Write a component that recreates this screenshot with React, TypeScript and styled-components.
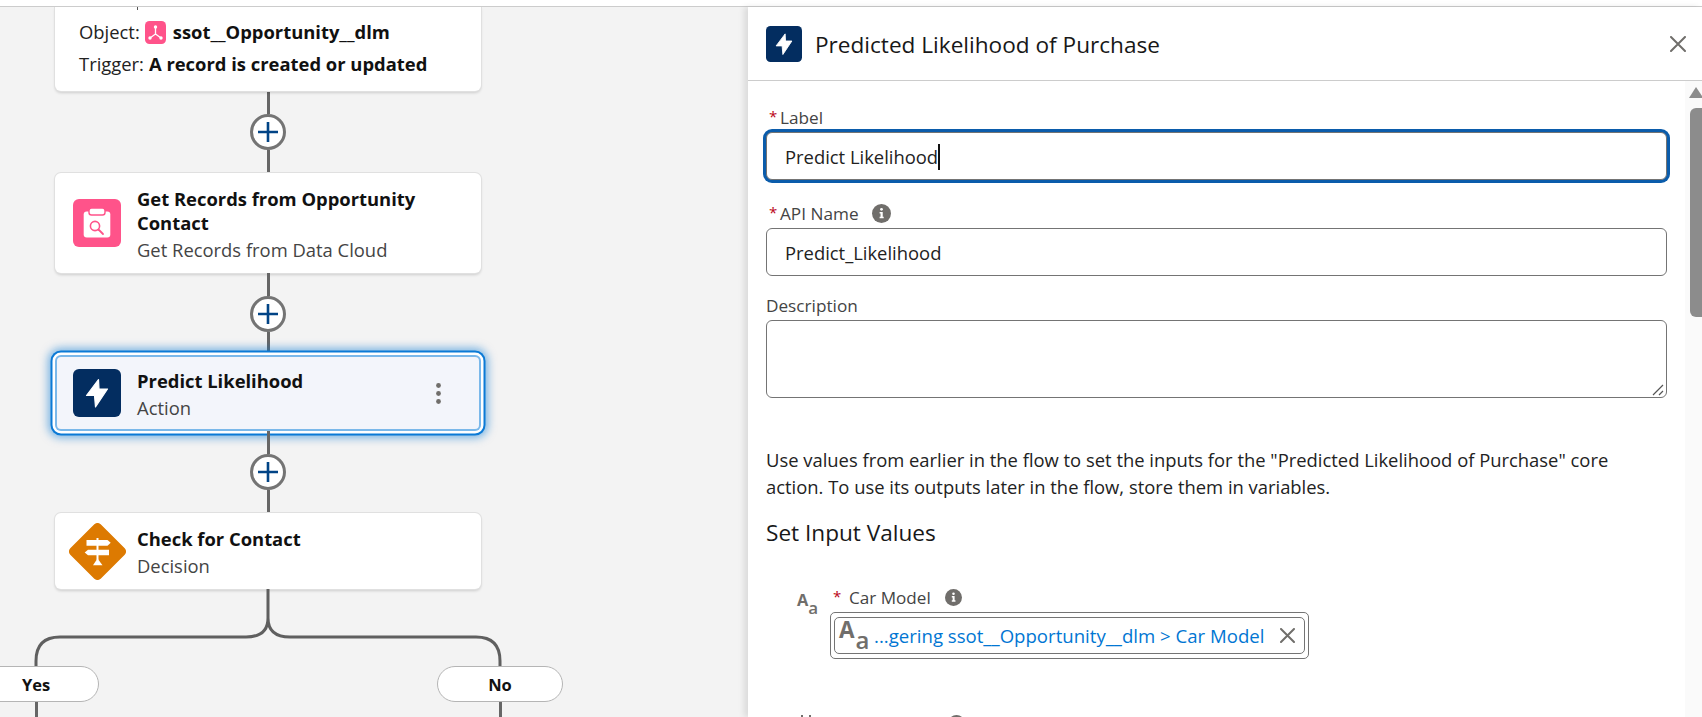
import React from "react";
import styled, {createGlobalStyle} from "styled-components";

const GlobalStyle = createGlobalStyle`
  html, body {
    margin: 0;
    padding: 0;
    height: 100%;
    overflow: hidden;
    background: #ffffff;
    font-family: "Open Sans", "Noto Sans", "Liberation Sans", sans-serif;
    color: #181818;
  }
  * { box-sizing: border-box; }
`;

const Page = styled.div`
  width: 1702px;
  height: 717px;
  display: flex;
  flex-direction: column;
  overflow: hidden;
`;

const TopBar = styled.div`
  height: 7px;
  flex: none;
  background: #ffffff;
  border-bottom: 1px solid #cccccc;
`;

const Main = styled.div`
  flex: 1;
  min-height: 0;
  display: flex;
`;

const Canvas = styled.div`
  width: 748px;
  flex: none;
  background: #f3f3f3;
  overflow: hidden;
  display: flex;
  flex-direction: column;
`;

const FlowColumn = styled.div`
  width: 426px;
  margin-left: 55px;
  display: flex;
  flex-direction: column;
  align-items: center;
`;

const NodeCard = styled.div<{$height: number; $selected?: boolean}>`
  width: 100%;
  height: ${(p) => p.$height}px;
  flex: none;
  display: flex;
  align-items: center;
  gap: 16px;
  padding-left: 18px;
  border-radius: 6px;
  background: ${(p) => (p.$selected ? "#f3f5fb" : "#ffffff")};
  box-shadow: ${(p) =>
    p.$selected
      ? "inset 0 0 0 2px #7ab8ea, 0 0 0 2.5px #ffffff, 0 0 0 4.5px #0b7ad6, 0 0 9px 7px rgba(1, 118, 211, 0.5)"
      : "0 0 0 1px #e0e0e0, 0 2px 3px rgba(0, 0, 0, 0.16)"};
`;

const StartCard = styled.div`
  position: relative;
  width: 100%;
  height: 84px;
  flex: none;
  padding: 8px 0 0 24px;
  background: #ffffff;
  border-radius: 0 0 6px 6px;
  box-shadow: 0 0 0 1px #e0e0e0, 0 2px 3px rgba(0, 0, 0, 0.16);
  &::before {
    content: "";
    position: absolute;
    left: 82px;
    top: 0;
    width: 1px;
    height: 3px;
    background: #555555;
  }
`;

const StartRow = styled.div`
  display: flex;
  align-items: center;
  height: 32px;
  font-size: 18.4px;
  gap: 5px;
  color: #222222;
  b {
    font-weight: 700;
    color: #111111;
  }
`;

const NodeText = styled.div`
  display: flex;
  flex-direction: column;
  padding-top: 3px;
`;

const NodeTitle = styled.div`
  font-size: 18.4px;
  line-height: 24px;
  font-weight: 700;
  color: #111111;
`;

const NodeSub = styled.div`
  font-size: 18.4px;
  line-height: 24px;
  margin-top: 3px;
  color: #444444;
`;

const Kebab = styled.svg`
  margin-left: auto;
  margin-right: 40px;
  flex: none;
`;

const Connector = styled.div`
  height: 82px;
  flex: none;
  display: flex;
  flex-direction: column;
  align-items: center;
`;

const Wire = styled.div<{$fixed?: number}>`
  width: 3px;
  flex: ${(p) => (p.$fixed ? "none" : "1")};
  height: ${(p) => (p.$fixed ? `${p.$fixed}px` : "auto")};
  background: #666666;
`;

const PlusButton = styled.div`
  width: 36px;
  height: 36px;
  flex: none;
  border-radius: 50%;
  border: 3px solid #747474;
  background: #ffffff;
  display: flex;
  align-items: center;
  justify-content: center;
`;

const Branch = styled.svg`
  display: block;
  flex: none;
  margin-left: 33px;
`;

const PillRow = styled.div`
  width: 590px;
  margin-left: -27px;
  margin-top: -2px;
  display: flex;
  justify-content: space-between;
  flex: none;
`;

const BranchLeg = styled.div`
  width: 126px;
  display: flex;
  flex-direction: column;
  align-items: center;
`;

const Pill = styled.div`
  width: 126px;
  height: 36px;
  flex: none;
  border-radius: 18px;
  border: 1px solid #b5b5b5;
  background: #ffffff;
  display: flex;
  align-items: center;
  justify-content: center;
  font-size: 16.5px;
  font-weight: 700;
  color: #111111;
`;

const Panel = styled.div`
  flex: 1;
  min-width: 0;
  display: flex;
  flex-direction: column;
  background: #ffffff;
  box-shadow: -4px 0 6px rgba(0, 0, 0, 0.1);
  position: relative;
`;

const PanelHeader = styled.div`
  height: 74px;
  flex: none;
  display: flex;
  align-items: center;
  gap: 13px;
  padding: 0 16px 0 18px;
  border-bottom: 1px solid #cccccc;
`;

const PanelTitle = styled.div`
  font-size: 22.6px;
  color: #181818;
  padding-top: 2px;
`;

const CloseButton = styled.svg`
  margin-left: auto;
  flex: none;
`;

const PanelBody = styled.div`
  flex: 1;
  min-height: 0;
  display: flex;
`;

const Form = styled.div`
  flex: 1;
  min-width: 0;
  padding: 25px 18px 0;
  overflow: hidden;
`;

const Field = styled.div<{$gap?: number}>`
  margin-bottom: ${(p) => p.$gap ?? 0}px;
`;

const FieldLabel = styled.div`
  display: flex;
  align-items: center;
  height: 24px;
  margin-bottom: 2px;
  padding-bottom: 2px;
  font-size: 17.2px;
  color: #444444;
`;

const Star = styled.span`
  color: #ba0517;
  font-size: 15px;
  width: 14px;
  padding: 0 0 3px 3px;
  flex: none;
`;

const InfoWrap = styled.span<{$left: number}>`
  display: inline-flex;
  margin-left: ${(p) => p.$left}px;
`;

const TextBox = styled.div<{$focused?: boolean}>`
  height: 48px;
  display: flex;
  align-items: center;
  padding: 1px 0 0 18px;
  font-size: 18.4px;
  color: #222222;
  background: #ffffff;
  border: 1px solid #747474;
  border-radius: 6px;
  box-shadow: ${(p) => (p.$focused ? "0 0 0 3px #0b5cab" : "none")};
`;

const Caret = styled.span`
  width: 2px;
  height: 26px;
  background: #111111;
  flex: none;
`;

const DescriptionWrap = styled.div`
  position: relative;
  height: 78px;
`;

const DescriptionBox = styled.textarea`
  display: block;
  width: 100%;
  height: 100%;
  border: 1px solid #747474;
  border-radius: 6px;
  background: #ffffff;
  outline: none;
  resize: none;
`;

const ResizeGrip = styled.svg`
  position: absolute;
  right: 3px;
  bottom: 2px;
`;

const HelpText = styled.p`
  margin: 48px 0 0;
  font-size: 18.4px;
  line-height: 27px;
  color: #222222;
  white-space: nowrap;
`;

const SectionTitle = styled.h2`
  margin: 18px 0 0;
  font-size: 22.6px;
  line-height: 30px;
  font-weight: 400;
  color: #181818;
`;

const InputRow = styled.div<{$top: number}>`
  display: flex;
  margin-top: ${(p) => p.$top}px;
  margin-left: 31px;
`;

const TypeCol = styled.div`
  width: 33px;
  flex: none;
  padding-top: 4px;
`;

const InputCol = styled.div`
  width: 479px;
  flex: none;
`;

const RowLabel = styled.div`
  display: flex;
  align-items: center;
  height: 24px;
  margin-bottom: 3px;
  font-size: 17.1px;
  color: #444444;
`;

const RowStar = styled.span`
  color: #ba0517;
  font-size: 15px;
  width: 19px;
  padding: 0 0 3px 3px;
  flex: none;
`;

const ComboBox = styled.div`
  height: 47px;
  padding: 4px 3px;
  border: 1px solid #747474;
  border-radius: 5px;
  background: #ffffff;
`;

const ValuePill = styled.div`
  height: 37px;
  display: flex;
  align-items: center;
  padding: 0 9px 0 4px;
  border: 1px solid #747474;
  border-radius: 5px;
`;

const ValueText = styled.span`
  margin-left: 7px;
  font-size: 18.6px;
  color: #0176d3;
  white-space: nowrap;
`;

const ValueClear = styled.svg`
  margin-left: auto;
  flex: none;
`;

const TypeIcon = styled.span<{$big?: boolean}>`
  display: inline-flex;
  align-items: flex-start;
  width: ${(p) => (p.$big ? 28 : 20)}px;
  height: ${(p) => (p.$big ? 30 : 20)}px;
  flex: none;
  color: #706e6b;
  font-weight: 700;
  line-height: 1;
  font-size: ${(p) => (p.$big ? 22.5 : 16.4)}px;
  span:first-child {
    margin-top: ${(p) => (p.$big ? -2 : -6)}px;
    margin-right: ${(p) => (p.$big ? 1 : 0)}px;
  }
  span + span {
    margin-top: ${(p) => (p.$big ? 7 : 1)}px;
    font-size: ${(p) => (p.$big ? 24 : 17)}px;
    font-weight: 600;
  }
`;

const ScrollTrack = styled.div`
  width: 17px;
  flex: none;
  background: #fafafa;
  display: flex;
  flex-direction: column;
  align-items: flex-end;
`;

const ScrollArrow = styled.svg`
  margin-top: 6px;
  flex: none;
`;

const ScrollThumb = styled.div`
  width: 12px;
  height: 209px;
  margin-top: 10px;
  border-radius: 6px 0 0 6px;
  background: #8c8c8c;
`;

const BoltIcon = ({size}: {size: number}) => (
    <svg width={size} height={size} viewBox="0 0 48 48" style={{flex: "none"}}>
        <rect width="48" height="48" rx="6" fill="#032d60"/>
        <path d="M25.5 10.5 L13.5 26.5 H21.5 L22.5 38 L34.5 20 H26 Z" fill="#ffffff" stroke="#ffffff" strokeWidth="1.2" strokeLinejoin="round"/>
    </svg>
);

const RecordsIcon = () => (
    <svg width="48" height="48" viewBox="0 0 48 48" style={{flex: "none"}}>
        <rect width="48" height="48" rx="6" fill="#ff538a"/>
        <rect x="10.7" y="12.5" width="26.6" height="26" rx="3" fill="#ffffff"/>
        <rect x="16" y="9" width="16" height="7" rx="2.5" fill="#ffffff" stroke="#ff538a" strokeWidth="1.4"/>
        <circle cx="22" cy="27" r="4.6" fill="none" stroke="#ff538a" strokeWidth="1.6"/>
        <path d="M25.5 30.5 L30 35" stroke="#ff538a" strokeWidth="1.8" strokeLinecap="round"/>
    </svg>
);

const DecisionIcon = () => (
    <svg width="57" height="57" viewBox="0 0 57 57" style={{flex: "none", margin: "0 -5px 0 -4px"}}>
        <rect x="7" y="7" width="43" height="43" rx="4.5" fill="#dd7a01" transform="rotate(45 28.5 28.5)"/>
        <path d="M27.5 15 H29.5 V37 H27.5 Z" fill="#ffffff"/>
        <path d="M17.5 17 H38.5 L41.7 19.8 L38.5 22.7 H17.5 Z" fill="#ffffff"/>
        <path d="M19 26.7 H40 V32.3 H19 L15.7 29.5 Z" fill="#ffffff"/>
        <path d="M28.5 35.5 L33.5 42.3 H24 Z" fill="#ffffff"/>
    </svg>
);

const ObjectIcon = () => (
    <svg width="21" height="23" viewBox="0 0 21 23" style={{flex: "none", margin: "2px 2px 0 0"}}>
        <rect width="21" height="23" rx="4.5" fill="#ff538a"/>
        <path d="M10.5 6 V13 L5 17 M10.5 13 L16 17" fill="none" stroke="#ffffff" strokeWidth="1.3"/>
        <circle cx="10.5" cy="6" r="1.7" fill="#ffffff"/>
        <circle cx="5" cy="17" r="1.7" fill="#ffffff"/>
        <circle cx="16" cy="17" r="1.7" fill="#ffffff"/>
    </svg>
);

const InfoIcon = ({size}: {size: number}) => (
    <svg width={size} height={size} viewBox="0 0 20 20" style={{flex: "none"}}>
        <circle cx="10" cy="10" r="10" fill="#706e6b"/>
        <circle cx="10" cy="5.6" r="1.5" fill="#ffffff"/>
        <path d="M8 8.3 H11.3 V13.3 H12.3 V15 H8 V13.3 H9 V10 H8 Z" fill="#ffffff"/>
    </svg>
);

const CrossIcon = ({size}: {size: number}) => (
    <path d={`M1 1 L${size - 1} ${size - 1} M${size - 1} 1 L1 ${size - 1}`} stroke="#706e6b" strokeWidth="2" strokeLinecap="round"/>
);

const AddStep = () => (
    <Connector>
        <Wire/>
        <PlusButton>
            <svg width="20" height="20" viewBox="0 0 20 20">
                <path d="M10 0 V20 M0 10 H20" stroke="#014486" strokeWidth="2.6"/>
            </svg>
        </PlusButton>
        <Wire/>
    </Connector>
);

const App = () => {
    return (
        <Page>
            <GlobalStyle/>
            <TopBar/>
            <Main>
                <Canvas>
                    <FlowColumn>
                        <StartCard>
                            <StartRow>Object: <ObjectIcon/> <b>ssot__Opportunity__dlm</b></StartRow>
                            <StartRow>Trigger: <b>A record is created or updated</b></StartRow>
                        </StartCard>
                        <AddStep/>
                        <NodeCard $height={100}>
                            <RecordsIcon/>
                            <NodeText>
                                <NodeTitle>Get Records from Opportunity<br/>Contact</NodeTitle>
                                <NodeSub>Get Records from Data Cloud</NodeSub>
                            </NodeText>
                        </NodeCard>
                        <AddStep/>
                        <NodeCard $height={76} $selected>
                            <BoltIcon size={48}/>
                            <NodeText>
                                <NodeTitle>Predict Likelihood</NodeTitle>
                                <NodeSub>Action</NodeSub>
                            </NodeText>
                            <Kebab width="5" height="21" viewBox="0 0 5 21">
                                <circle cx="2.5" cy="2.5" r="2.4" fill="#706e6b"/>
                                <circle cx="2.5" cy="10.5" r="2.4" fill="#706e6b"/>
                                <circle cx="2.5" cy="18.5" r="2.4" fill="#706e6b"/>
                            </Kebab>
                        </NodeCard>
                        <AddStep/>
                        <NodeCard $height={76}>
                            <DecisionIcon/>
                            <NodeText>
                                <NodeTitle>Check for Contact</NodeTitle>
                                <NodeSub>Decision</NodeSub>
                            </NodeText>
                        </NodeCard>
                    </FlowColumn>
                    <Branch width="470" height="79" viewBox="0 0 470 79">
                        <path
                            d="M235 0 V29 Q235 48 213 48 H27 Q3 48 3 72 V79 M235 29 Q235 48 257 48 H443 Q467 48 467 72 V79"
                            fill="none"
                            stroke="#5f5f5f"
                            strokeWidth="3"
                        />
                    </Branch>
                    <PillRow>
                        <BranchLeg>
                            <Pill>Yes</Pill>
                            <Wire $fixed={20}/>
                        </BranchLeg>
                        <BranchLeg>
                            <Pill>No</Pill>
                            <Wire $fixed={20}/>
                        </BranchLeg>
                    </PillRow>
                </Canvas>
                <Panel>
                    <PanelHeader>
                        <BoltIcon size={36}/>
                        <PanelTitle>Predicted Likelihood of Purchase</PanelTitle>
                        <CloseButton width="16" height="16" viewBox="0 0 16 16">
                            <CrossIcon size={16}/>
                        </CloseButton>
                    </PanelHeader>
                    <PanelBody>
                        <Form>
                            <Field $gap={22}>
                                <FieldLabel><Star>*</Star>Label</FieldLabel>
                                <TextBox $focused>Predict Likelihood<Caret/></TextBox>
                            </Field>
                            <Field $gap={18}>
                                <FieldLabel>
                                    <Star>*</Star>API Name
                                    <InfoWrap $left={13}><InfoIcon size={19}/></InfoWrap>
                                </FieldLabel>
                                <TextBox>Predict_Likelihood</TextBox>
                            </Field>
                            <Field>
                                <FieldLabel>Description</FieldLabel>
                                <DescriptionWrap>
                                    <DescriptionBox readOnly/>
                                    <ResizeGrip width="12" height="12" viewBox="0 0 12 12">
                                        <path d="M1 11 L11 1 M7 11 L11 7" stroke="#555555" strokeWidth="1.2"/>
                                    </ResizeGrip>
                                </DescriptionWrap>
                            </Field>
                            <HelpText>
                                Use values from earlier in the flow to set the inputs for the "Predicted Likelihood of Purchase" core
                                <br/>
                                action. To use its outputs later in the flow, store them in variables.
                            </HelpText>
                            <SectionTitle>Set Input Values</SectionTitle>
                            <InputRow $top={37}>
                                <TypeCol>
                                    <TypeIcon><span>A</span><span>a</span></TypeIcon>
                                </TypeCol>
                                <InputCol>
                                    <RowLabel>
                                        <RowStar>*</RowStar>Car Model
                                        <InfoWrap $left={14}><InfoIcon size={17}/></InfoWrap>
                                    </RowLabel>
                                    <ComboBox>
                                        <ValuePill>
                                            <TypeIcon $big><span>A</span><span>a</span></TypeIcon>
                                            <ValueText>...gering ssot__Opportunity__dlm &gt; Car Model</ValueText>
                                            <ValueClear width="15" height="15" viewBox="0 0 15 15">
                                                <CrossIcon size={15}/>
                                            </ValueClear>
                                        </ValuePill>
                                    </ComboBox>
                                </InputCol>
                            </InputRow>
                            <InputRow $top={52}>
                                <TypeCol>
                                    <svg width="20" height="20" viewBox="0 0 20 20">
                                        <path d="M5 0 V20 M13 0 V20 M1 6 H19 M1 14 H19" stroke="#706e6b" strokeWidth="2"/>
                                    </svg>
                                </TypeCol>
                                <InputCol>
                                    <RowLabel>
                                        <RowStar>*</RowStar>Mileage Tier
                                        <InfoWrap $left={2}><InfoIcon size={17}/></InfoWrap>
                                    </RowLabel>
                                </InputCol>
                            </InputRow>
                        </Form>
                        <ScrollTrack>
                            <ScrollArrow width="13" height="11" viewBox="0 0 13 11">
                                <path d="M0 11 L7 0 L13 9 V11 Z" fill="#8c8c8c"/>
                            </ScrollArrow>
                            <ScrollThumb/>
                        </ScrollTrack>
                    </PanelBody>
                </Panel>
            </Main>
        </Page>
    );
};

export default App;
